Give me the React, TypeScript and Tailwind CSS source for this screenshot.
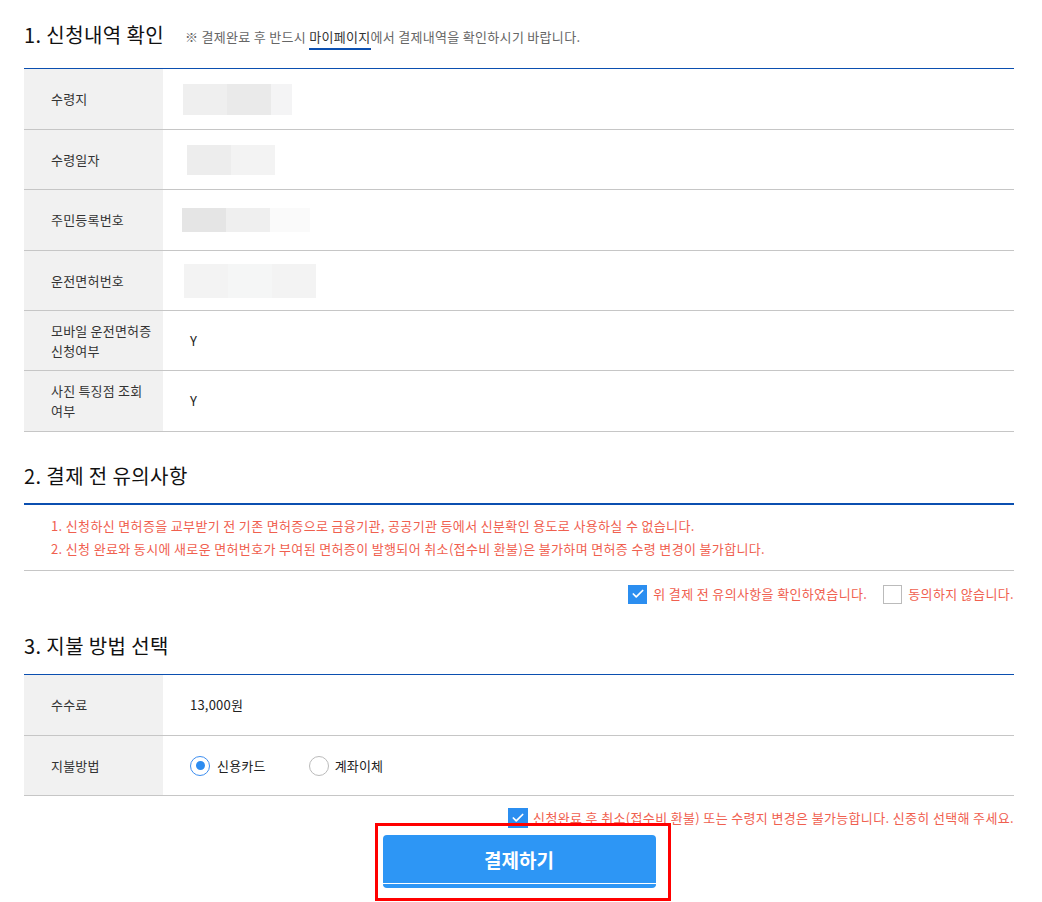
import { Check } from "lucide-react";

const font = { fontFamily: '"Noto Sans CJK KR", "Noto Sans", sans-serif' };

// blurred (masked) personal values
const masks: { ml: number; h: number; parts: [number, string][] }[] = [
  { ml: 20, h: 31, parts: [[44, "#efefef"], [44, "#eaeaea"], [21, "#f4f4f5"]] },
  { ml: 24, h: 30, parts: [[44, "#ededed"], [44, "#f3f3f3"]] },
  { ml: 19, h: 24, parts: [[44, "#e5e5e5"], [44, "#efefef"], [40, "#fafafa"]] },
  { ml: 21, h: 34, parts: [[44, "#f3f3f3"], [44, "#f5f6f6"], [44, "#f3f3f3"]] },
];

function Mask({ i }: { i: number }) {
  const m = masks[i];
  return (
    <div className="flex" style={{ marginLeft: m.ml, height: m.h }}>
      {m.parts.map(([w, c], k) => (
        <div key={k} style={{ width: w, background: c }} />
      ))}
    </div>
  );
}

function Row({
  label,
  h,
  children,
}: {
  label: React.ReactNode;
  h: string;
  children?: React.ReactNode;
}) {
  return (
    <div className={`flex border-b border-[#c6c6c6] ${h}`}>
      <div className="w-[139px] shrink-0 bg-[#f1f1f1] pl-[27px] flex items-center text-[13px] leading-[20px] tracking-[0.2px] text-[#333]">
        {label}
      </div>
      <div className="flex-1 flex items-center text-[13px] tracking-[0.2px] text-[#222]">{children}</div>
    </div>
  );
}

function BlueCheck({ size = "w-[19px] h-[19px]" }: { size?: string }) {
  return (
    <span className={`${size} bg-[#2b8ef0] flex items-center justify-center shrink-0`}>
      <Check className="w-[14px] h-[14px] text-white" strokeWidth={3} />
    </span>
  );
}

export default function App() {
  return (
    <div className="w-[1042px] h-[902px] bg-white pl-6 pr-7 overflow-hidden" style={font}>
      {/* 1 */}
      <div className="flex items-end pt-[21px] h-[68px] pb-[19px]">
        <h2 className="text-[20px] leading-[28px] tracking-[0.4px] text-[#111]">1. 신청내역 확인</h2>
        <p className="ml-[21px] mb-[2px] text-[13px] leading-[20px] tracking-[0.3px] text-[#666]">
          ※ 결제완료 후 반드시{" "}
          <span className="text-[#333] border-b-2 border-[#0b4fb0] pb-[2px]">마이페이지</span>
          에서 결제내역을 확인하시기 바랍니다.
        </p>
      </div>
      <div className="border-t border-[#0b4fb0]">
        <Row label="수령지" h="h-[61px]">
          <Mask i={0} />
        </Row>
        <Row label="수령일자" h="h-[60px]">
          <Mask i={1} />
        </Row>
        <Row label="주민등록번호" h="h-[61px]">
          <Mask i={2} />
        </Row>
        <Row label="운전면허번호" h="h-[60px]">
          <Mask i={3} />
        </Row>
        <Row label={<span>모바일 운전면허증<br />신청여부</span>} h="h-[60px]">
          <span className="pl-[27px]">Y</span>
        </Row>
        <Row label={<span>사진 특징점 조회<br />여부</span>} h="h-[61px]">
          <span className="pl-[27px]">Y</span>
        </Row>
      </div>

      {/* 2 */}
      <h2 className="mt-[30px] text-[20px] leading-[28px] tracking-[0.4px] text-[#111]">2. 결제 전 유의사항</h2>
      <div className="mt-[13px] border-t-2 border-[#0b4fb0] border-b border-b-[#c6c6c6] pt-[9px] pb-[10px] pl-[27px] text-[13px] leading-[23px] tracking-[0.35px] text-[#f0604f]">
        <p>1. 신청하신 면허증을 교부받기 전 기존 면허증으로 금융기관, 공공기관 등에서 신분확인 용도로 사용하실 수 없습니다.</p>
        <p>2. 신청 완료와 동시에 새로운 면허번호가 부여된 면허증이 발행되어 취소(접수비 환불)은 불가하며 면허증 수령 변경이 불가합니다.</p>
      </div>
      <div className="mt-[13px] flex justify-end items-center text-[13px] leading-[20px] tracking-[0.35px] text-[#f0604f]">
        <BlueCheck />
        <span className="ml-[6px]">위 결제 전 유의사항을 확인하였습니다.</span>
        <span className="ml-[16px] w-[19px] h-[19px] border border-[#bbb] bg-white" />
        <span className="ml-[6px]">동의하지 않습니다.</span>
      </div>

      {/* 3 */}
      <h2 className="mt-[28px] text-[20px] leading-[28px] tracking-[0.4px] text-[#111]">3. 지불 방법 선택</h2>
      <div className="mt-[14px] border-t border-[#0b4fb0]">
        <Row label="수수료" h="h-[61px]">
          <span className="pl-[27px]">13,000원</span>
        </Row>
        <Row label="지불방법" h="h-[60px]">
          <div className="pl-[27px] flex items-center">
            <span className="w-[20px] h-[20px] rounded-full border border-[#3d8ef0] flex items-center justify-center">
              <span className="w-[9px] h-[9px] rounded-full bg-[#2d8cf0]" />
            </span>
            <span className="ml-[7px]">신용카드</span>
            <span className="ml-[43px] w-[20px] h-[20px] rounded-full border border-[#bbb]" />
            <span className="ml-[6px]">계좌이체</span>
          </div>
        </Row>
      </div>
      <div className="mt-[12px] flex justify-end items-center text-[13px] leading-[20px] tracking-[0.35px] text-[#f0604f]">
        <BlueCheck size="w-[20px] h-[20px]" />
        <span className="ml-[5px]">신청완료 후 취소(접수비 환불) 또는 수령지 변경은 불가능합니다. 신중히 선택해 주세요.</span>
      </div>

      <div className="relative mx-auto mt-[7px] w-[273px]">
        <button className="w-full h-[53px] rounded-[4px] bg-[#2d96f5] text-white text-[19px] font-bold border-b-[3px] border-[#2d96f5] relative">
          결제하기
          <span className="absolute left-0 right-0 bottom-[1px] h-[1px] bg-white" />
        </button>
        <div className="absolute -left-[8px] -right-[15px] -top-[12px] h-[78px] border-[3px] border-[#ff0000] pointer-events-none" />
      </div>
    </div>
  );
}
